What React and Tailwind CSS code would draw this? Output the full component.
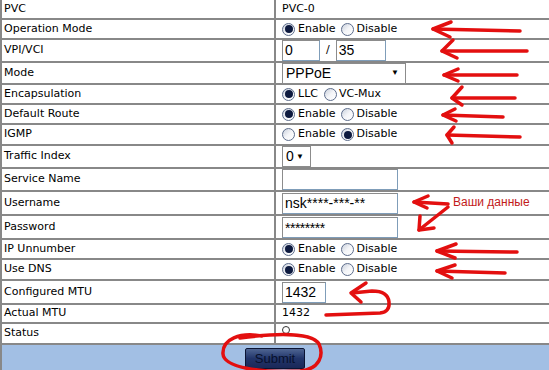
import React from 'react';

const label = "font-['DejaVu_Sans',sans-serif] text-[11px] text-black";

function Radio({ checked }) {
    return (
        <span className="inline-flex items-center justify-center w-[13px] h-[13px] rounded-full border border-[#5d6d8c] bg-gradient-to-br from-[#c9d0dc] via-[#f4f5f8] to-white">
            {checked && <span className="w-[8px] h-[8px] rounded-full bg-[#0d1a3f]" />}
        </span>
    );
}

function RadioPair({ a, b, first }) {
    return (
        <div className={`flex items-center ${label}`}>
            <Radio checked={first} />
            <span className="ml-[3px] mr-[6px]">{a}</span>
            <Radio checked={!first} />
            <span className="ml-[2px]">{b}</span>
        </div>
    );
}

function TextBox({ w, value, small }) {
    return (
        <div className={`${w} h-[21px] border border-[#7f9db9] border-t-[#8c8c8c] border-l-[#8c8c8c] bg-white flex items-center px-[2px] font-['Liberation_Sans',sans-serif] text-[14px] ${small ? 'tracking-[-0.5px] pt-[2px]' : ''} text-black`}>
            {value}
        </div>
    );
}

function Select({ w, value }) {
    return (
        <div className={`${w} h-[21px] border border-[#8c8c8c] bg-white flex items-center justify-between pl-[3px] pr-[6px] font-['Liberation_Sans',sans-serif] text-[14px] text-black`}>
            <span>{value}</span>
            <span className="text-[8px]">▼</span>
        </div>
    );
}

const rows = [
    { name: 'PVC', h: 'h-[20px]', v: <span className={label}>PVC-0</span> },
    { name: 'Operation Mode', h: 'h-[20px]', v: <RadioPair a="Enable" b="Disable" first /> },
    {
        name: 'VPI/VCI', h: 'h-[23px]', v: (
            <div className="flex items-center">
                <TextBox w="w-[38px]" value="0" />
                <span className={`${label} mx-[6px]`}>/</span>
                <TextBox w="w-[50px]" value="35" />
            </div>
        )
    },
    { name: 'Mode', h: 'h-[22px]', v: <Select w="w-[124px]" value="PPPoE" /> },
    { name: 'Encapsulation', h: 'h-[20px]', v: <RadioPair a="LLC" b="VC-Mux" first /> },
    { name: 'Default Route', h: 'h-[20px]', v: <RadioPair a="Enable" b="Disable" first /> },
    { name: 'IGMP', h: 'h-[21px]', v: <RadioPair a="Enable" b="Disable" /> },
    { name: 'Traffic Index', h: 'h-[23px]', v: <Select w="w-[29px]" value="0" /> },
    { name: 'Service Name', h: 'h-[23px]', v: <TextBox w="w-[116px]" value="" /> },
    { name: 'Username', h: 'h-[24px]', v: <TextBox w="w-[116px]" value="nsk****-***-**" /> },
    { name: 'Password', h: 'h-[24px]', v: <TextBox w="w-[116px]" value="********" small /> },
    { name: 'IP Unnumber', h: 'h-[20px]', v: <RadioPair a="Enable" b="Disable" first /> },
    { name: 'Use DNS', h: 'h-[21px]', v: <RadioPair a="Enable" b="Disable" first /> },
    { name: 'Configured MTU', h: 'h-[24px]', v: <TextBox w="w-[44px]" value="1432" /> },
    { name: 'Actual MTU', h: 'h-[19px]', v: <span className={label}>1432</span> },
    { name: 'Status', h: 'h-[21px]', v: <span className="mt-[2px] w-[8px] h-[8px] rounded-full border border-[#333] bg-white self-start" /> },
];

function Arrow({ tail, tip, up, down }) {
    return (
        <g>
            <path d={`M${tail[0]} ${tail[1]} L${tip[0]} ${tip[1]}`} />
            <path d={`M${up[0]} ${up[1]} L${tip[0]} ${tip[1]} L${down[0]} ${down[1]}`} />
        </g>
    );
}

export default function App() {
    return (
        <div className="relative w-[549px] h-[370px] overflow-hidden bg-white">
            <div className="flex flex-col w-[560px]">
                {rows.map((r) => (
                    <div key={r.name} className={`flex ${r.h} border-b-2 border-[#888]`}>
                        <div className={`w-[276px] shrink-0 flex items-center pl-[2px] border-l-2 border-r-2 border-[#888] ${label}`}>
                            {r.name}
                        </div>
                        <div className="flex-1 flex items-center pl-[6px]">{r.v}</div>
                    </div>
                ))}
                <div className="h-[26px] bg-[#a2bfe4] border-l-2 border-[#888] flex items-center justify-center">
                    <button className="-translate-x-[6px] w-[60px] h-[21px] rounded-[2px] border border-[#0b1433] bg-gradient-to-b from-[#4f6592] via-[#22356a] to-[#1a2858] font-['Liberation_Sans',sans-serif] text-[13px] text-[#07102c]">
                        Submit
                    </button>
                </div>
            </div>

            <span className="absolute left-[453px] top-[193px] font-['Liberation_Sans',sans-serif] text-[12px] text-[#c21a1a]">
                Ваши данные
            </span>

            <svg className="absolute inset-0 pointer-events-none" width="549" height="370" viewBox="0 0 549 370" fill="none" stroke="#e30f0f" strokeWidth="3.5" strokeLinecap="round" strokeLinejoin="round">
                <Arrow tail={[520, 31]} tip={[433, 29]} up={[451, 22]} down={[450, 37]} />
                <Arrow tail={[527, 51]} tip={[442, 51]} up={[453, 40]} down={[457, 58]} />
                <Arrow tail={[517, 75]} tip={[444, 75]} up={[458, 69]} down={[458, 81]} />
                <Arrow tail={[515, 98]} tip={[452, 98]} up={[462, 87]} down={[462, 105]} />
                <Arrow tail={[503, 117]} tip={[443, 115]} up={[455, 109]} down={[456, 121]} />
                <Arrow tail={[520, 137]} tip={[447, 135]} up={[454, 127]} down={[452, 143]} />
                <Arrow tail={[448, 204]} tip={[414, 202]} up={[428, 196]} down={[427, 208]} />
                <Arrow tail={[448, 207]} tip={[419, 230]} up={[420, 216]} down={[434, 228]} />
                <Arrow tail={[517, 252]} tip={[437, 251]} up={[456, 244]} down={[455, 258]} />
                <Arrow tail={[505, 273]} tip={[437, 271]} up={[455, 265]} down={[452, 278]} />
                <path d="M326 315 L380 313 Q390 312 389 302 Q388 291 372 291 L352 293" />
                <path d="M366 283 L351 293 L361 302" />
                <path d="M262 336 C240 332 222 339 223 354 C224 368 262 373 300 371 C320 369 324 355 319 344 C313 334 285 332 240 338" />
            </svg>
        </div>
    );
}
